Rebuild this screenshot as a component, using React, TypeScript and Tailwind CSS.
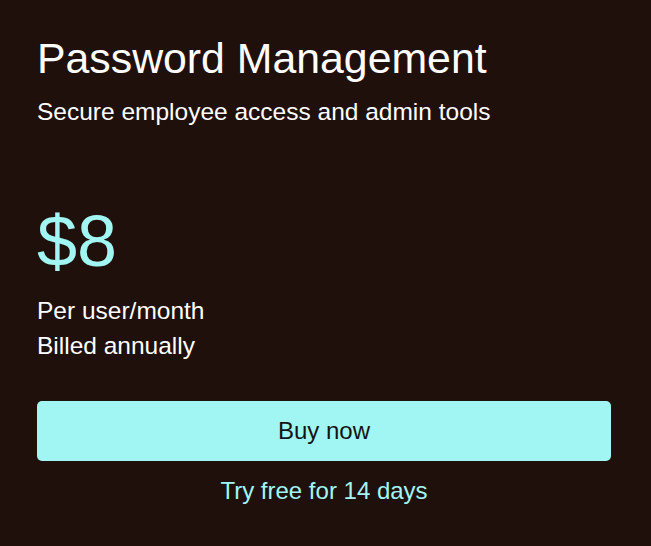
export default function App() {
  return (
    <div className="w-[651px] h-[546px] bg-[#20100b] text-white pl-[37px] pr-[40px] pt-[32px] flex flex-col" style={{ fontFamily: '"Liberation Sans", Arial, sans-serif' }}>
      <h1 className="text-[42.8px] leading-[52px] font-normal">Password Management</h1>
      <p className="mt-[12px] text-[24.5px] leading-[32px]">Secure employee access and admin tools</p>
      <div className="mt-[77px] text-[72px] leading-[72px] text-[#a1f6f3]">$8</div>
      <div className="mt-[16px] text-[24.5px] leading-[35px]">
        <p>Per user/month</p>
        <p>Billed annually</p>
      </div>
      <button className="mt-[38px] h-[60px] w-full rounded-[5px] bg-[#a1f6f3] text-[#141414] text-[24px] leading-[32px] flex items-center justify-center">
        Buy now
      </button>
      <a className="mt-[14px] text-center text-[24px] leading-[32px] text-[#a1f6f3]">Try free for 14 days</a>
    </div>
  );
}
